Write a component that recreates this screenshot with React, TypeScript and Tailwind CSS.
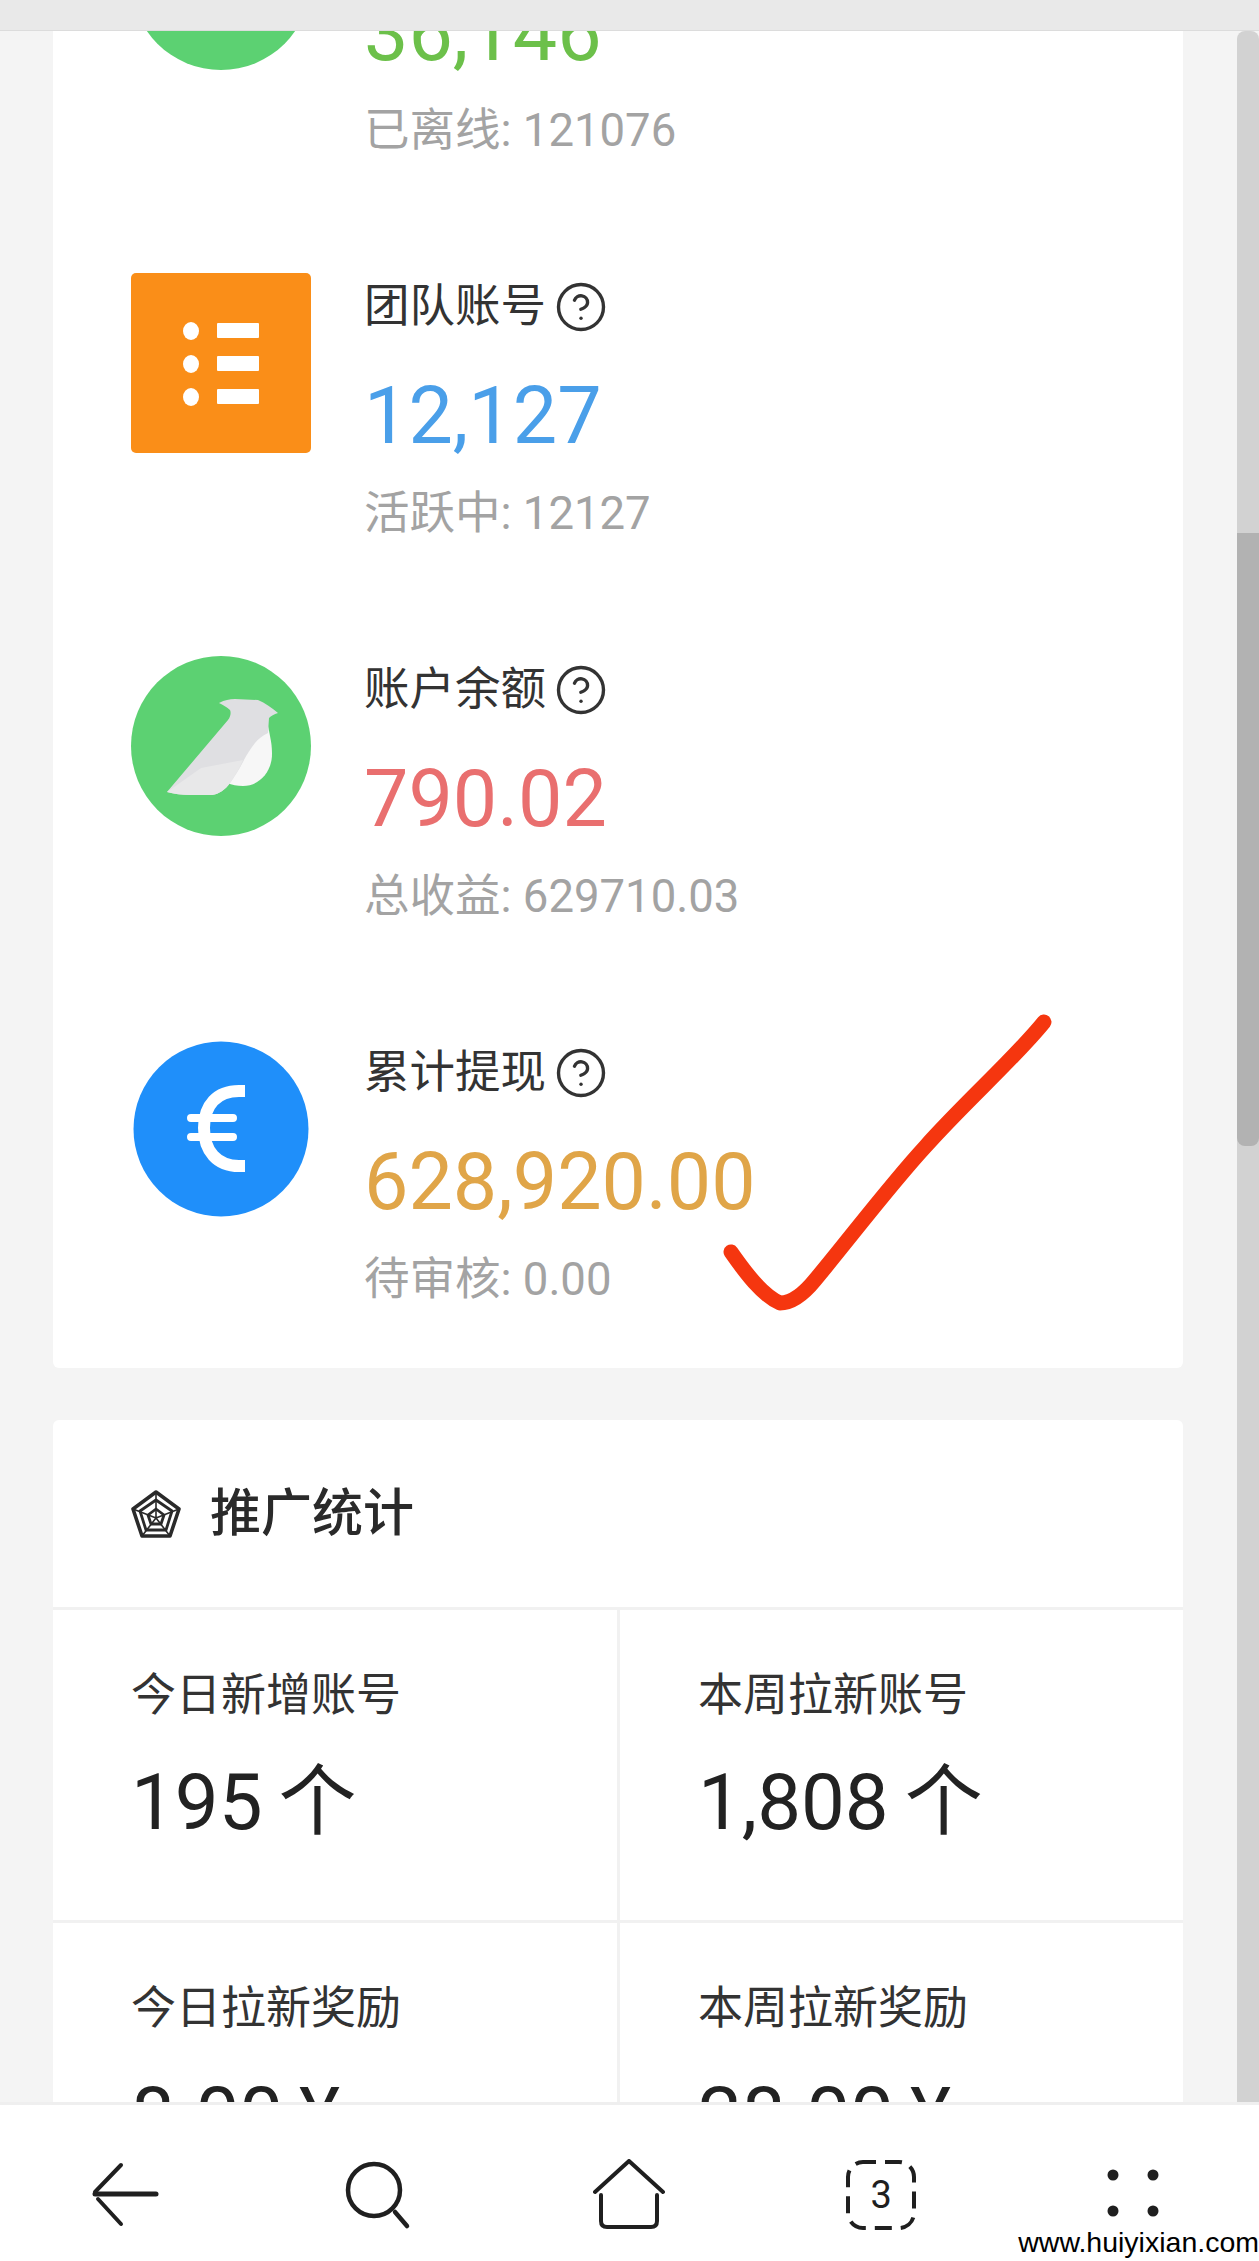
import { CircleHelp } from 'lucide-react'
import type { ReactNode } from 'react'

function OrangeIcon() {
  return (
    <svg width="180" height="180" viewBox="0 0 180 180">
      <rect width="180" height="180" rx="5" fill="#fa8e18" />
      <g fill="#fff">
        <ellipse cx="60" cy="58" rx="8" ry="9" />
        <ellipse cx="60" cy="91" rx="8" ry="9" />
        <ellipse cx="60" cy="124" rx="8" ry="9" />
        <rect x="86" y="50" width="42" height="15" rx="1" />
        <rect x="86" y="83" width="42" height="15" rx="1" />
        <rect x="86" y="116" width="42" height="15" rx="1" />
      </g>
    </svg>
  )
}

function BirdIcon() {
  return (
    <svg width="180" height="180" viewBox="0 0 180 180">
      <circle cx="90" cy="90" r="90" fill="#5cd172" />
      <path d="M137 70 C140 84 141 90 141 98 C141 116 128 130 112 130 C106 130 101 129 96 127 L90 100 Z" fill="#f7f7f7" />
      <path
        d="M36 136 L97 64 C100 60 100 56 99 54 C96 51 92 49 88 47 C94 44 98 43 104 43 L127 44 C134 47 141 52 147 57 C143 58 140 60 138 62 L137 77 C131 80 127 83 124 87 C120 92 116 98 113 104 C109 112 104 120 99 127 C94 134 88 138 81 139 L59 139 C51 139 43 138 36 136 Z"
        fill="#dfdfe2"
      />
      <path d="M36 136 L70 112 L112 104 C109 112 104 120 99 127 C94 134 88 138 81 139 L59 139 C51 139 43 138 36 136 Z" fill="#e8e8e9" />
    </svg>
  )
}

function EuroIcon() {
  return (
    <svg width="180" height="180" viewBox="0 0 180 180">
      <circle cx="90" cy="90" r="87.5" fill="#1f8ffa" />
      <g fill="none" stroke="#fff">
        <path d="M114 52 L108 52 C86 52 73 66 73 89 C73 112 86 127 108 127 L114 127" strokeWidth="12" />
        <path d="M60 79 L102 79 M60 98 L102 98" strokeWidth="8" strokeLinecap="round" />
      </g>
    </svg>
  )
}

function GreenDot() {
  return (
    <svg width="180" height="180" viewBox="0 0 180 180">
      <circle cx="90" cy="90" r="90" fill="#5cd172" />
    </svg>
  )
}

function StatRow({ icon, label, value, valueColor, sub }: { icon: ReactNode; label?: string; value: string; valueColor: string; sub: string }) {
  return (
    <div className="flex h-[272px] gap-[53px]">
      <div className="h-[180px] w-[180px] shrink-0">{icon}</div>
      <div className="pt-[2px]">
        <div className="flex h-[64px] items-center gap-[8px] text-[45.5px] leading-[64px] text-[#333]">
          {label}
          {label && <CircleHelp size={54} strokeWidth={1.5} className="text-[#333]" />}
        </div>
        <div className={`mt-[32px] h-[90px] text-[79px] leading-[90px] ${valueColor}`}>{value}</div>
        <div className="mt-[21px] h-[64px] text-[45.5px] leading-[64px] text-[#a3a3a3]">{sub}</div>
      </div>
    </div>
  )
}

function PromoCell({ label, value, unit, left }: { label: string; value: string; unit: string; left?: boolean }) {
  return (
    <div className={`pt-[54px] ${left ? 'pl-[78px]' : 'border-l-[3px] border-[#f1f1f1] pl-[78px]'}`}>
      <div className="text-[45px] leading-[64px] text-[#333]">{label}</div>
      <div className="mt-[30px] flex h-[90px] items-center gap-[16px] text-[78px] leading-[90px] text-[#222]">
        <span>{value}</span>
        <span>{unit}</span>
      </div>
    </div>
  )
}

export default function App() {
  return (
    <div className="relative flex h-[2261px] w-[1259px] flex-col overflow-hidden bg-[#f4f4f4] font-['Roboto','Noto_Sans_CJK_SC',sans-serif]">
      <div className="relative z-10 h-[31px] shrink-0 border-b border-[#dcdcdc] bg-[#e9e9e9]" />

      <div className="flex min-h-0 flex-1 overflow-hidden">
        <div className="min-w-0 flex-1 pl-[53px] pr-[54px]">
          <div className="-mt-[141px] rounded-[6px] bg-white pb-[57px] pl-[78px]">
            <div className="flex flex-col gap-[111px]">
              <StatRow icon={<GreenDot />} value="36,146" valueColor="text-[#6cc04a]" sub="已离线: 121076" />
              <StatRow icon={<OrangeIcon />} label="团队账号" value="12,127" valueColor="text-[#4a9fe9]" sub="活跃中: 12127" />
              <StatRow icon={<BirdIcon />} label="账户余额" value="790.02" valueColor="text-[#e96f6f]" sub="总收益: 629710.03" />
              <StatRow icon={<EuroIcon />} label="累计提现" value="628,920.00" valueColor="text-[#e0a548]" sub="待审核: 0.00" />
            </div>
          </div>

          <div className="mt-[52px] rounded-[6px] bg-white">
            <div className="flex h-[190px] items-center gap-[29px] border-b-[3px] border-[#f1f1f1] pl-[78px]">
              <svg width="50" height="48" viewBox="0 0 50 48" fill="none" stroke="#2a2a2a" strokeWidth="2.8" strokeLinejoin="round">
                <path d="M25 2 L48 19 L39 46 L11 46 L2 19 Z" strokeWidth="3.6" />
                <path d="M25 10 L41 21 L35 40 L15 40 L9 21 Z" />
                <path d="M25 19 L33 25 L30 34 L20 34 L17 25 Z" />
                <path d="M25 2 L25 28 M48 19 L25 28 M39 46 L25 28 M11 46 L25 28 M2 19 L25 28" strokeWidth="1.6" />
              </svg>
              <span className="text-[51px] font-medium leading-[64px] text-[#2a2a2a]">推广统计</span>
            </div>
            <div className="grid h-[310px] grid-cols-[564px_1fr]">
              <PromoCell left label="今日新增账号" value="195" unit="个" />
              <PromoCell label="本周拉新账号" value="1,808" unit="个" />
            </div>
            <div className="grid h-[313px] grid-cols-[564px_1fr] border-t-[3px] border-[#f1f1f1]">
              <PromoCell left label="今日拉新奖励" value="8.00" unit="¥" />
              <PromoCell label="本周拉新奖励" value="28.00" unit="¥" />
            </div>
          </div>
        </div>

        <div className="w-[22px] shrink-0 rounded-t-[8px] bg-[#d2d2d2] pt-[502px]">
          <div className="h-[613px] rounded-b-[8px] bg-[#b2b2b2]" />
        </div>
      </div>

      <div className="relative z-10 grid h-[159px] shrink-0 grid-cols-5 border-t-[3px] border-[#efefef] bg-white pt-[54px]">
        <div className="flex justify-center">
          <svg width="72" height="72" viewBox="0 0 72 72" fill="none" stroke="#1f1f1f" strokeWidth="4" strokeLinecap="round">
            <path d="M5 35 L66 35" strokeWidth="5" />
            <path d="M5 33 L31 6" />
            <path d="M8 40 L31 65" />
          </svg>
        </div>
        <div className="flex justify-center">
          <svg width="72" height="72" viewBox="0 0 72 72" fill="none" stroke="#1f1f1f" strokeWidth="4.5" strokeLinecap="round">
            <circle cx="32" cy="31" r="26" />
            <path d="M53 53 L65 67" />
          </svg>
        </div>
        <div className="flex justify-center">
          <svg width="72" height="72" viewBox="0 0 72 72" fill="none" stroke="#1f1f1f" strokeWidth="4" strokeLinecap="round" strokeLinejoin="round">
            <path d="M2 33 L36 2 L70 33" />
            <path d="M8 36 L8 62 Q8 68 14 68 L58 68 Q64 68 64 62 L64 36" />
          </svg>
        </div>
        <div className="flex justify-center">
          <div className="relative flex h-[72px] w-[72px] items-center justify-center">
            <svg width="72" height="72" viewBox="0 0 72 72" fill="none" stroke="#1f1f1f" strokeWidth="4" className="absolute inset-0">
              <rect x="3" y="3" width="66" height="66" rx="15" strokeDasharray="17 9" strokeDashoffset="4" />
            </svg>
            <span className="text-[38px] leading-none text-[#1f1f1f]">3</span>
          </div>
        </div>
        <div className="flex justify-center">
          <svg width="72" height="72" viewBox="0 0 72 72" fill="#1f1f1f">
            <circle cx="16" cy="16" r="5.5" />
            <circle cx="56" cy="16" r="5.5" />
            <circle cx="16" cy="52" r="5.5" />
            <circle cx="56" cy="52" r="5.5" />
          </svg>
        </div>
      </div>

      <svg width="340" height="310" viewBox="0 0 340 310" fill="none" className="absolute left-[720px] top-[1010px] z-20">
        <path d="M11 242 C25 262 42 285 60 293 C70 293 82 286 95 270 C130 228 170 175 205 137 C245 92 295 48 324 12" stroke="#f5360f" strokeWidth="15" strokeLinecap="round" strokeLinejoin="round" />
      </svg>

      <div className="absolute bottom-[3px] right-0 z-20 font-['Liberation_Sans',sans-serif] text-[28.5px] leading-[32px] text-black">www.huiyixian.com</div>
    </div>
  )
}
